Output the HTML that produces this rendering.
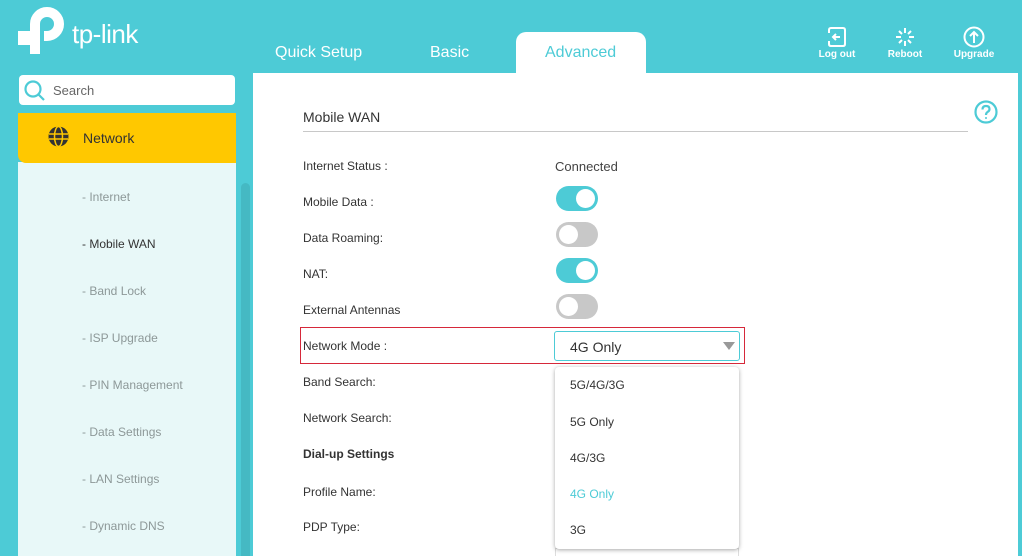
<!DOCTYPE html>
<html><head><meta charset="utf-8"><style>
*{margin:0;padding:0;box-sizing:border-box}
html,body{width:1022px;height:556px;overflow:hidden}
body{background:#4dcbd6;font-family:"Liberation Sans",sans-serif;position:relative;color:#333}
.a{position:absolute}
.tab{position:absolute;top:44px;font-size:16px;color:#fff}
.hdr{position:absolute;top:49px;font-size:10px;font-weight:bold;color:#fff;text-align:center;width:60px}
.side{left:18px;top:162px;width:218px;height:394px;background:#e8f8f8}
.sub{position:absolute;left:82px;font-size:12px;color:#8d9898}
.lbl{position:absolute;left:303px;font-size:12px;color:#333}
.tg{position:absolute;left:556px;width:42px;height:25px;border-radius:13px}
.tg.on{background:#4dcbd6}.tg.off{background:#c8c8c8}
.tg i{position:absolute;top:3px;width:19px;height:19px;border-radius:50%;background:#fff}
.tg.on i{right:3px}.tg.off i{left:3px}
.opt{position:absolute;left:15px;font-size:12px;color:#333}
</style></head><body>
<svg class="a" style="left:0;top:0" width="70" height="60" viewBox="0 0 70 60">
<path d="M35 54 V24 A12 12 0 1 1 47 36 H44" fill="none" stroke="#fff" stroke-width="10"/>
<rect x="18" y="31" width="20" height="14" fill="#fff"/>
</svg>
<div class="a" style="left:72px;top:19px;font-size:26px;color:#fff;letter-spacing:-0.5px">tp-link</div>
<div class="tab" style="left:275px">Quick Setup</div>
<div class="tab" style="left:430px">Basic</div>
<div class="a" style="left:516px;top:32px;width:130px;height:42px;background:#fff;border-radius:10px 10px 0 0"></div>
<div class="tab" style="left:545px;color:#4dcbd6">Advanced</div>
<svg class="a" style="left:827px;top:27px" width="20" height="20" viewBox="0 0 20 20" fill="none" stroke="#fff" stroke-width="2"><path d="M2 6V3Q2 1 4 1H16Q18 1 18 3V17Q18 19 16 19H4Q2 19 2 17V14"/><path d="M6 10H13M9 7L6 10L9 13"/></svg>
<div class="hdr" style="left:807px">Log out</div>
<svg class="a" style="left:895px;top:27px" width="20" height="20" viewBox="0 0 20 20" stroke="#fff" stroke-width="2"><path d="M10 1V6M10 14V19M1 10H6M14 10H19M4 4L7 7M13 13L16 16M16 4L13 7M7 13L4 16"/></svg>
<div class="hdr" style="left:875px">Reboot</div>
<svg class="a" style="left:963px;top:26px" width="22" height="22" viewBox="0 0 22 22" fill="none" stroke="#fff" stroke-width="2"><circle cx="11" cy="11" r="9.5"/><path d="M11 17V7M7 10L11 6L15 10" /></svg>
<div class="hdr" style="left:944px">Upgrade</div>
<div class="a" style="left:19px;top:75px;width:216px;height:30px;background:#fff;border-radius:4px"></div>
<svg class="a" style="left:23px;top:79px" width="24" height="24" viewBox="0 0 24 24" fill="none" stroke="#4dcbd6" stroke-width="2.2"><circle cx="10" cy="10" r="7.5"/><path d="M15.5 15.5L21 21"/></svg>
<div class="a" style="left:53px;top:83px;font-size:13px;color:#666">Search</div>
<div class="a side"></div>
<div class="a" style="left:18px;top:113px;width:218px;height:50px;background:#ffc800;border-radius:0 0 0 8px"></div>
<svg class="a" style="left:48px;top:126px" width="21" height="21" viewBox="0 0 21 21"><circle cx="10.5" cy="10.5" r="10" fill="#333"/><g stroke="#ffc800" stroke-width="1.5" fill="none"><path d="M1 8H20M1 13H20"/><ellipse cx="10.5" cy="10.5" rx="4" ry="10"/></g></svg>
<div class="a" style="left:83px;top:130px;font-size:14px;color:#333">Network</div>
<div class="sub" style="top:190px">- Internet</div>
<div class="sub" style="top:237px;color:#333">- Mobile WAN</div>
<div class="sub" style="top:284px">- Band Lock</div>
<div class="sub" style="top:331px">- ISP Upgrade</div>
<div class="sub" style="top:378px">- PIN Management</div>
<div class="sub" style="top:425px">- Data Settings</div>
<div class="sub" style="top:472px">- LAN Settings</div>
<div class="sub" style="top:519px">- Dynamic DNS</div>
<div class="a" style="left:241px;top:183px;width:9px;height:373px;background:#45b9c3;border-radius:5px 5px 0 0"></div>
<div class="a" style="left:253px;top:73px;width:765px;height:483px;background:#fff"></div>
<div class="a" style="left:303px;top:109px;font-size:14px;color:#333">Mobile WAN</div>
<div class="a" style="left:303px;top:131px;width:665px;height:1px;background:#c8c8c8"></div>
<svg class="a" style="left:974px;top:100px" width="24" height="24" viewBox="0 0 24 24" fill="none" stroke="#4dcbd6" stroke-width="2.2"><circle cx="12" cy="12" r="10.5"/><path d="M8.5 9.5Q8.5 6 12 6Q15.5 6 15.5 9Q15.5 11 13.5 12Q12 13 12 15"/><circle cx="12" cy="18" r="1" fill="#4dcbd6" stroke="none"/></svg>
<div class="lbl" style="top:159px">Internet Status :</div>
<div class="a" style="left:555px;top:159px;font-size:13px;color:#444">Connected</div>
<div class="lbl" style="top:195px">Mobile Data :</div><div class="tg on" style="top:186px"><i></i></div>
<div class="lbl" style="top:231px">Data Roaming:</div><div class="tg off" style="top:222px"><i></i></div>
<div class="lbl" style="top:267px">NAT:</div><div class="tg on" style="top:258px"><i></i></div>
<div class="lbl" style="top:303px">External Antennas</div><div class="tg off" style="top:294px"><i></i></div>
<div class="a" style="left:300px;top:327px;width:445px;height:37px;border:1px solid #d6283a"></div>
<div class="lbl" style="top:339px">Network Mode :</div>
<div class="a" style="left:554px;top:331px;width:186px;height:30px;border:1px solid #4dcbd6;border-radius:3px"></div>
<div class="a" style="left:570px;top:339px;font-size:14px;color:#333">4G Only</div>
<div class="a" style="left:723px;top:342px;width:0;height:0;border-left:6px solid transparent;border-right:6px solid transparent;border-top:8px solid #999"></div>
<div class="lbl" style="top:375px">Band Search:</div>
<div class="lbl" style="top:411px">Network Search:</div>
<div class="lbl" style="top:447px;font-weight:bold">Dial-up Settings</div>
<div class="lbl" style="top:485px">Profile Name:</div>
<div class="lbl" style="top:520px">PDP Type:</div>
<div class="a" style="left:555px;top:548px;width:184px;height:8px;border:1px solid #ddd;border-bottom:none"></div>
<div class="a" style="left:555px;top:367px;width:184px;height:182px;background:#fff;border-radius:4px;box-shadow:0 1px 4px rgba(0,0,0,.35)">
<div class="opt" style="top:11px">5G/4G/3G</div>
<div class="opt" style="top:48px">5G Only</div>
<div class="opt" style="top:84px">4G/3G</div>
<div class="opt" style="top:120px;color:#4dcbd6">4G Only</div>
<div class="opt" style="top:156px">3G</div>
</div>
</body></html>
